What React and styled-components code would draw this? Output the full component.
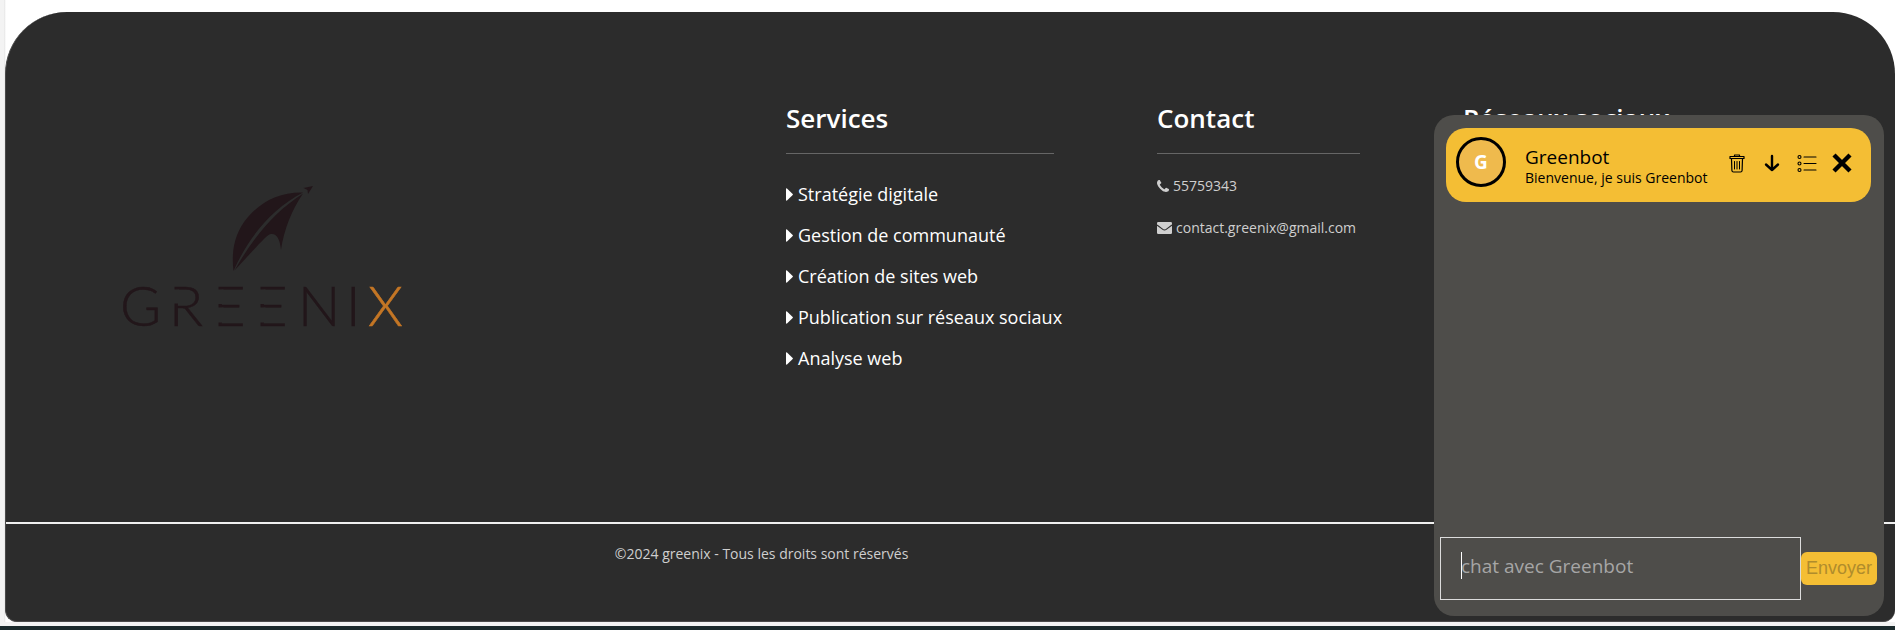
import React from "react";
import styled, { createGlobalStyle, css } from "styled-components";

const GlobalStyle = createGlobalStyle`
  *, *::before, *::after { box-sizing: border-box; }
  body {
    margin: 0;
    background: #fff;
    color: #fff;
    font-family: "Open Sans", "Noto Sans", sans-serif;
  }
`;

const Page = styled.div`
  min-height: 100vh;
  display: flex;
  flex-direction: column;
  padding-top: 12px;
  padding-left: 5px;
  background: linear-gradient(to right, #f3f3f3 4px, #e4e4e4 4px, #fff 6px);
`;

const SiteFooter = styled.footer`
  flex: 1;
  display: flex;
  flex-direction: column;
  border: solid #4a4a4a;
  border-width: 0 0 1px 1px;
  border-radius: 62px 62px 12px 12px;
  background: #2c2c2c;
`;

const BottomStrip = styled.div`
  height: 8px;
  margin-left: -5px;
  border-top: 4px solid #f3f3f3;
  background: #1b2a2c;
`;

const Columns = styled.div`
  flex: 1;
  display: grid;
  grid-template-columns: 1fr 268px 203px 203px;
  column-gap: 103px;
  padding: 87px 229px 0 115px;
  border-bottom: 2px solid #f0f0f0;
`;

const Brand = styled.div`
  padding-top: 87px;
`;

const Column = styled.section`
  display: flex;
  flex-direction: column;
  white-space: nowrap;
`;

const Title = styled.h2`
  margin: 0;
  height: 55px;
  font-size: 26px;
  line-height: 38px;
  font-weight: 600;
  border-bottom: 1px solid #666;
`;

const List = styled.ul`
  list-style: none;
  margin: 0;
  padding: ${(p) => (p.$compact ? "20px 0 0" : "28px 0 0")};
  display: flex;
  flex-direction: column;
  gap: ${(p) => (p.$compact ? "18px" : "17px")};
`;

const FooterLink = styled.a`
  display: flex;
  align-items: center;
  gap: 4px;
  text-decoration: none;
  line-height: 24px;
  font-size: 18px;
  color: #fff;
  svg { flex: none; }
  ${(p) =>
    p.$muted &&
    css`
      font-size: 14px;
      color: #cfcfcf;
    `}
`;

const Copyright = styled.p`
  margin: 0;
  width: 80%;
  height: 97px;
  padding-top: 18px;
  text-align: center;
  font-size: 14px;
  line-height: 24px;
  color: #cfcfcf;
`;

const ChatPanel = styled.aside`
  position: fixed;
  right: 11px;
  bottom: 14px;
  width: 450px;
  height: 501px;
  display: flex;
  flex-direction: column;
  justify-content: space-between;
  padding: 13px 7px 16px 6px;
  border-radius: 20px;
  background: #4e4d4a;
`;

const ChatHeader = styled.header`
  display: flex;
  align-items: center;
  height: 74px;
  margin: 0 6px;
  padding: 0 17px 0 10px;
  border-radius: 20px;
  background: #f4be34;
  color: #000;
`;

const Avatar = styled.div`
  flex: none;
  display: grid;
  place-items: center;
  width: 50px;
  height: 50px;
  margin-bottom: 6px;
  border: 3px solid #000;
  border-radius: 50%;
  background: #efba4d;
  color: #fff;
  font-size: 19px;
  font-weight: 700;
`;

const Identity = styled.div`
  flex: 1;
  min-width: 0;
  margin: 0 12px 0 19px;
  padding-top: 2px;
  overflow: hidden;
  white-space: nowrap;
`;

const BotName = styled.h3`
  margin: 0;
  font-size: 19px;
  line-height: 22px;
  font-weight: 500;
`;

const Welcome = styled.p`
  margin: 0;
  font-size: 14px;
  line-height: 19px;
`;

const Actions = styled.div`
  display: flex;
  gap: 10px;
  padding-bottom: 4px;
`;

const IconButton = styled.button`
  display: grid;
  place-items: center;
  width: 25px;
  height: 26px;
  padding: 0;
  border: 0;
  background: none;
  color: #000;
  cursor: pointer;
`;

const ChatForm = styled.form`
  display: flex;
  align-items: center;
`;

const Field = styled.label`
  position: relative;
  flex: 1;
  min-width: 0;
  display: flex;
  &::before {
    content: "";
    position: absolute;
    left: 21px;
    top: 15px;
    width: 1px;
    height: 27px;
    background: #fff;
  }
`;

const ChatInput = styled.input`
  width: 100%;
  height: 63px;
  padding: 0 20px 6px;
  border: 1px solid #dcdcdc;
  border-radius: 0;
  outline: 0;
  background: transparent;
  color: #fff;
  caret-color: transparent;
  font: 19px "Open Sans", "Noto Sans", sans-serif;
  &::placeholder { color: #a6a6a6; opacity: 1; }
`;

const SendButton = styled.button`
  width: 76px;
  height: 33px;
  padding: 0;
  border: 0;
  border-radius: 6px;
  background: #f4be34;
  color: #b08c2c;
  font: 18px "Liberation Sans", Arial, sans-serif;
`;

const Wordmark = styled.text`
  font-family: Lato, sans-serif;
  font-weight: 300;
  font-size: 56px;
  stroke-width: 0.5px;
`;

function Logo() {
  return (
    <svg width="290" height="150" viewBox="0 0 290 150" role="img" aria-label="Greenix">
      <g fill="#22161a">
        <path d="M112.500 85C110 64 114 46 127 31C141 15 159 6 182 6.500C151 23 128 50 112.500 85Z" />
        <path d="M113.500 84.500C132 52 152 27 182 7.500C171 24 163 43 160 64C159 52 155 47 150 48C147 48.500 143 53 138 58Z" />
        <path d="M182.500 2L192 0L187 8L186.500 4Z" />
      </g>
      <Wordmark y="140" x="-1 48 92 134 177 225 247" fill="#22161a" stroke="#22161a">
        GREENI<tspan fill="#c47625" stroke="#c47625">X</tspan>
      </Wordmark>
      {/* Gaps that open the stems of the R and of both Es */}
      <g fill="#2c2c2c">
        <rect x="51" y="103.500" width="7" height="14" />
        <rect x="94" y="103.500" width="8.500" height="14.500" />
        <rect x="94" y="121.500" width="8.500" height="15" />
        <rect x="136" y="103.500" width="8.500" height="14.500" />
        <rect x="136" y="121.500" width="8.500" height="15" />
      </g>
    </svg>
  );
}

const CaretIcon = () => (
  <svg width="8" height="13" viewBox="0 0 8 13" fill="currentColor">
    <path d="M0 1Q0 0 1 0.500L6.700 6Q7.200 6.500 6.700 7L1 12.500Q0 13 0 12Z" />
  </svg>
);

const PhoneIcon = () => (
  <svg width="12" height="12" viewBox="0 128 1408 1408" fill="currentColor">
    <path d="M1408 1240q0 27-10 70.500t-21 68.500q-21 50-122 106-94 51-186 51-27 0-52.500-3.500t-57.500-12.500-47.500-14.500-55.500-20.500-49-18q-98-35-175-83-128-79-264.500-215.500t-215.500-264.500q-48-77-83-175-3-9-18-49t-20.500-55.500-14.500-47.500-12.500-57.500-3.500-52.500q0-92 51-186 56-101 106-122 25-11 68.500-21t70.500-10q14 0 21 3 18 6 53 76 11 19 30 54t35 63.500 31 53.500q3 4 17.500 25t21.500 35.500 7 28.500q0 20-28.500 50t-62 55-62 53-28.500 46q0 9 5 22.500t8.500 20.500 14 24 11.500 19q76 137 174 235t235 174q2 1 19 11.500t24 14 20.500 8.500 22.500 5q18 0 46-28.500t53-62 55-62 50-28.500q14 0 28.500 7t35.500 21.500 25 17.500q25 15 53.500 31t63.500 35 54 30q70 35 76 53 3 7 3 21z" />
  </svg>
);

const EnvelopeIcon = () => (
  <svg width="15" height="12" viewBox="0 0 15 12">
    <rect width="15" height="12" rx="1.200" fill="currentColor" />
    <path d="M0 3L5.800 7.400Q7.500 8.600 9.200 7.400L15 3" fill="none" stroke="#2c2c2c" strokeWidth="1.100" />
  </svg>
);

const stroke = { fill: "none", stroke: "currentColor", strokeLinecap: "round", strokeLinejoin: "round" };

const TrashIcon = () => (
  <svg width="16" height="19" viewBox="0 0 16 19" {...stroke} strokeWidth="1.200">
    <path d="M1 2.500H15V4.500H1ZM5.500 2V1H10.500V2" />
    <path d="M2.500 5L2.900 16.500Q3 18 4.500 18H11.500Q13 18 13.100 16.500L13.500 5" />
    <path d="M5.500 7.500V15M8 7.500V15M10.500 7.500V15" strokeWidth="1" />
  </svg>
);

const ArrowDownIcon = () => (
  <svg width="16" height="18" viewBox="0 0 16 18" {...stroke} strokeWidth="2.400">
    <path d="M8 2V16M2 10.500L8 16L14 10.500" />
  </svg>
);

const ListIcon = () => (
  <svg width="20" height="19" viewBox="0 0 20 19" {...stroke} strokeWidth="1.100">
    <circle cx="2.500" cy="3" r="1.500" />
    <circle cx="2.500" cy="9.500" r="1.500" />
    <circle cx="2.500" cy="16" r="1.500" />
    <path d="M7 3H19M7 9.500H19M7 16H19" />
  </svg>
);

const CloseIcon = () => (
  <svg width="20" height="20" viewBox="0 0 20 20" {...stroke} strokeLinecap="butt" strokeWidth="4.400">
    <path d="M2 2L18 18M18 2L2 18" />
  </svg>
);

const services = [
  "Stratégie digitale",
  "Gestion de communauté",
  "Création de sites web",
  "Publication sur réseaux sociaux",
  "Analyse web",
];

const actions = [
  ["Effacer la conversation", TrashIcon],
  ["Descendre", ArrowDownIcon],
  ["Menu", ListIcon],
  ["Fermer", CloseIcon],
];

export default function App() {
  return (
    <Page>
      <GlobalStyle />
      <SiteFooter>
        <Columns>
          <Brand>
            <Logo />
          </Brand>
          <Column>
            <Title>Services</Title>
            <List>
              {services.map((name) => (
                <li key={name}>
                  <FooterLink href="#">
                    <CaretIcon />
                    {name}
                  </FooterLink>
                </li>
              ))}
            </List>
          </Column>
          <Column>
            <Title>Contact</Title>
            <List $compact>
              <li>
                <FooterLink $muted href="tel:55759343">
                  <PhoneIcon />
                  55759343
                </FooterLink>
              </li>
              <li>
                <FooterLink $muted href="mailto:contact.greenix@gmail.com">
                  <EnvelopeIcon />
                  contact.greenix@gmail.com
                </FooterLink>
              </li>
            </List>
          </Column>
          <Column>
            <Title>Réseaux sociaux</Title>
          </Column>
        </Columns>
        <Copyright>©2024 greenix - Tous les droits sont réservés</Copyright>
      </SiteFooter>
      <BottomStrip />

      <ChatPanel aria-label="Greenbot">
        <ChatHeader>
          <Avatar>G</Avatar>
          <Identity>
            <BotName>Greenbot</BotName>
            <Welcome>Bienvenue, je suis Greenbot</Welcome>
          </Identity>
          <Actions>
            {actions.map(([label, Icon]) => (
              <IconButton key={label} type="button" aria-label={label}>
                <Icon />
              </IconButton>
            ))}
          </Actions>
        </ChatHeader>
        <ChatForm onSubmit={(e) => e.preventDefault()}>
          <Field>
            <ChatInput type="text" aria-label="Message" placeholder="chat avec Greenbot" />
          </Field>
          <SendButton type="submit" disabled>
            Envoyer
          </SendButton>
        </ChatForm>
      </ChatPanel>
    </Page>
  );
}
